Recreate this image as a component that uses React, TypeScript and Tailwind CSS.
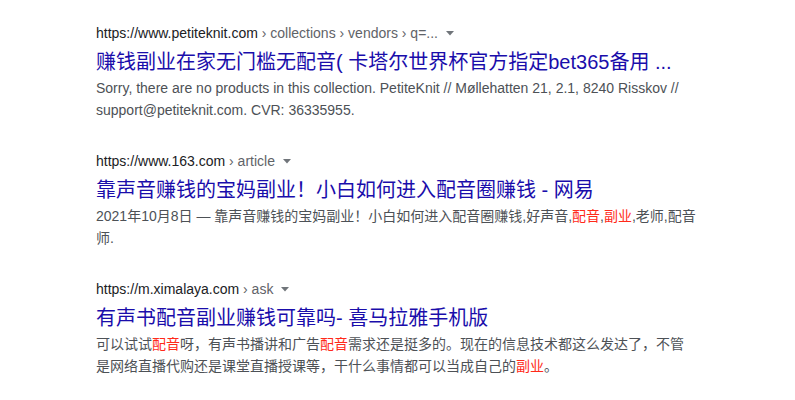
const font = 'font-["Liberation_Sans","Arial","Noto_Sans_CJK_SC",sans-serif]'

type Piece = string | { hl: string }

type Result = {
	host: string
	path: string
	title: string
	snippet: Piece[]
}

const results: Result[] = [
	{
		host: 'https://www.petiteknit.com',
		path: '\u00a0› collections › vendors › q=...',
		title: '赚钱副业在家无门槛无配音( 卡塔尔世界杯官方指定bet365备用 ...',
		snippet: [
			'Sorry, there are no products in this collection. PetiteKnit // Møllehatten 21, 2.1, 8240 Risskov // support@petiteknit.com. CVR: 36335955.',
		],
	},
	{
		host: 'https://www.163.com',
		path: '\u00a0› article',
		title: '靠声音赚钱的宝妈副业！小白如何进入配音圈赚钱 - 网易',
		snippet: [
			'2021年10月8日 — 靠声音赚钱的宝妈副业！小白如何进入配音圈赚钱,好声音,',
			{ hl: '配音' },
			',',
			{ hl: '副业' },
			',老师,配音师.',
		],
	},
	{
		host: 'https://m.ximalaya.com',
		path: '\u00a0› ask',
		title: '有声书配音副业赚钱可靠吗- 喜马拉雅手机版',
		snippet: [
			'可以试试',
			{ hl: '配音' },
			'呀，有声书播讲和广告',
			{ hl: '配音' },
			'需求还是挺多的。现在的信息技术都这么发达了，不管是网络直播代购还是课堂直播授课等，干什么事情都可以当成自己的',
			{ hl: '副业' },
			'。',
		],
	},
]

function Caret() {
	return (
		<svg width="10" height="10" viewBox="0 0 10 10" className="ml-[7px] inline-block">
			<path d="M1 3h8L5 7.5z" fill="#70757a" />
		</svg>
	)
}

function SearchResult({ r }: { r: Result }) {
	return (
		<div className="mb-[31px]">
			<div className="flex items-center text-[14px] leading-[18px] whitespace-pre">
				<span className="text-[#202124]">{r.host}</span>
				<span className="text-[#5f6368]">{r.path}</span>
				<Caret />
			</div>
			<h3 className="mt-[7px] text-[20px] leading-[26px] text-[#1a0dab] whitespace-nowrap">{r.title}</h3>
			<div className="mt-[2px] text-[14px] leading-[22px] text-[#4d5156]">
				{r.snippet.map((p, i) =>
					typeof p === 'string' ? (
						<span key={i}>{p}</span>
					) : (
						<span key={i} className="text-[#ff2a1a]">
							{p.hl}
						</span>
					),
				)}
			</div>
		</div>
	)
}

export default function App() {
	return (
		<div className={`${font} min-h-[400px] bg-white pl-[96px] pt-[24px]`}>
			<div className="w-[600px]">
				{results.map((r) => (
					<SearchResult key={r.host} r={r} />
				))}
			</div>
		</div>
	)
}
